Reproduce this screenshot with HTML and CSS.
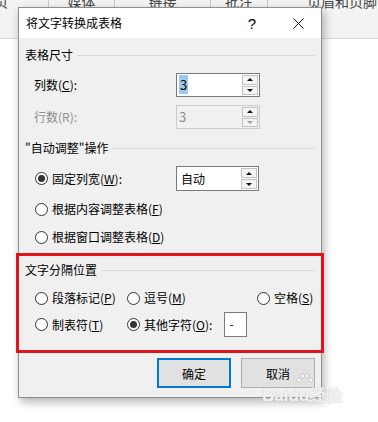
FILE: index.html
```html
<!DOCTYPE html>
<html lang="zh">
<head>
    <meta charset="UTF-8">
    <link rel="stylesheet" href="styles.css">
    <title>将文字转换成表格</title>
</head>
<body>

    <!-- Word ribbon behind the dialog -->
    <div class="ribbon">
        <span class="tab tab-first">页</span>
        <span class="tab tab-media">媒体</span>
        <span class="tab tab-link">链接</span>
        <span class="tab tab-note">批注</span>
        <span class="tab tab-head">页眉和页脚</span>
    </div>

    <div class="dialog">
        <div class="titlebar">
            <span class="title">将文字转换成表格</span>
            <span class="tbtn help">?</span>
            <span class="tbtn close">
                <svg width="11" height="11" viewBox="0 0 11 11"><path d="M0.5 0.5L10.5 10.5M10.5 0.5L0.5 10.5" stroke="#111" stroke-width="1" fill="none"/></svg>
            </span>
        </div>

        <div class="content">
            <div class="group-title first"><span>表格尺寸</span></div>

            <div class="row field-row">
                <span class="lbl">列数(<u>C</u>):</span>
                <div class="spin">
                    <span class="val"><span class="sel">3</span></span>
                    <span class="arrows"><i class="up"></i><i class="down"></i></span>
                </div>
            </div>

            <div class="row field-row second">
                <span class="lbl disabled">行数(R):</span>
                <div class="spin off">
                    <span class="val">3</span>
                    <span class="arrows"><i class="up"></i><i class="down"></i></span>
                </div>
            </div>

            <div class="group-title"><span>"自动调整"操作</span></div>

            <div class="row fixed-row">
                <span class="opt opt-fixed"><span class="radio on"></span>固定列宽(<u>W</u>):</span>
                <div class="spin combo">
                    <span class="val">自动</span>
                    <span class="arrows"><i class="up"></i><i class="down"></i></span>
                </div>
            </div>

            <div class="opt opt-line"><span class="radio"></span>根据内容调整表格(<u>F</u>)</div>
            <div class="opt opt-line last"><span class="radio"></span>根据窗口调整表格(<u>D</u>)</div>

            <div class="marked">
                <div class="group-title legend"><span>文字分隔位置</span></div>

                <div class="sep-row">
                    <span class="opt w1"><span class="radio"></span>段落标记(<u>P</u>)</span>
                    <span class="opt w2"><span class="radio"></span>逗号(<u>M</u>)</span>
                    <span class="opt"><span class="radio"></span>空格(<u>S</u>)</span>
                </div>

                <div class="sep-row tall">
                    <span class="opt w1"><span class="radio"></span>制表符(<u>T</u>)</span>
                    <span class="opt"><span class="radio on"></span>其他字符(<u>O</u>):</span>
                    <span class="char-box">-</span>
                </div>
            </div>

            <div class="buttons">
                <button class="btn default">确定</button>
                <button class="btn">取消</button>
            </div>
        </div>
    </div>

    <!-- watermark -->
    <div class="watermark">
        <svg class="paw" width="18" height="13" viewBox="0 0 18 13">
            <circle cx="3" cy="7" r="2" fill="#fff" stroke="#c8c8c8"/>
            <circle cx="7" cy="3" r="2" fill="#fff" stroke="#c8c8c8"/>
            <circle cx="11" cy="3" r="2" fill="#fff" stroke="#c8c8c8"/>
            <circle cx="15" cy="7" r="2" fill="#fff" stroke="#c8c8c8"/>
        </svg>
        <span>Baidu经验</span>
    </div>

</body>
</html>
```

FILE: styles.css
```css
* {
    box-sizing: border-box;
}

body {
    margin: 0;
    width: 378px;
    height: 422px;
    overflow: hidden;
    position: relative;
    background-color: #fff;
    font-family: "Noto Sans CJK SC", sans-serif;
    font-size: 12px;
    color: #000;
}

/* ribbon */
.ribbon {
    height: 39px;
    background-color: #f3f3f3;
    border-bottom: 1px solid #d9d9d9;
    display: flex;
    overflow: hidden;
}

.tab {
    height: 50px;
    margin-top: -6px;
    border-right: 1px solid #c9c9c9;
    font-size: 14px;
    line-height: 14px;
    color: #444;
    text-align: center;
    flex: none;
}

.tab-first { width: 49px; text-align: left; text-indent: -6px; }
.tab-media { width: 66px; }
.tab-link { width: 96px; }
.tab-note { width: 57px; }
.tab-head { width: 148px; border-right: none; }

/* dialog */
.dialog {
    position: absolute;
    left: 18px;
    top: 7px;
    width: 304px;
    height: 391px;
    border: 1px solid #8e8e8e;
    background-color: #f0f0f0;
    box-shadow: 2px 4px 9px rgba(0, 0, 0, 0.3);
}

.titlebar {
    height: 30px;
    background-color: #fff;
    display: flex;
    align-items: center;
    padding-left: 7px;
}

.title {
    flex: 1;
    line-height: 16px;
}

.tbtn {
    width: 46px;
    height: 30px;
    display: flex;
    align-items: center;
    justify-content: center;
}

.help {
    font-family: "Liberation Sans", sans-serif;
    font-size: 15px;
}

.content {
    padding: 0 6px;
}

.group-title {
    display: flex;
    align-items: center;
    height: 16px;
    margin-top: 11px;
    line-height: 16px;
}

.group-title.first {
    margin-top: 9px;
}

.group-title::after {
    content: "";
    flex: 1;
    border-top: 1px solid #dadada;
    margin-left: 4px;
}

.row {
    display: flex;
    align-items: center;
}

.field-row {
    height: 24px;
    margin-top: 10px;
    padding-left: 9px;
}

.field-row.second {
    margin-top: 8px;
}

.lbl {
    width: 142px;
    line-height: 16px;
}

.disabled {
    color: #8d8d8d;
}

.spin {
    width: 84px;
    height: 24px;
    border: 1px solid #7a7a7a;
    background-color: #fff;
    display: flex;
    align-items: center;
    padding: 1px;
}

.spin .val {
    flex: 1;
    padding-left: 1px;
    font-size: 13px;
    line-height: 18px;
}

.sel {
    background-color: #9fc8ee;
    padding: 0 1px;
}

.spin.off {
    border-color: #cccccc;
    background-color: #f0f0f0;
    color: #8d8d8d;
}

.arrows {
    width: 16px;
    height: 100%;
    display: flex;
    flex-direction: column;
    gap: 1px;
}

.arrows i {
    flex: 1;
    border: 1px solid #c2c2c2;
    background-color: #f4f4f4;
    display: flex;
    align-items: center;
    justify-content: center;
}

.arrows i::after {
    content: "";
    border-left: 3px solid transparent;
    border-right: 3px solid transparent;
}

.arrows .up::after {
    border-bottom: 3px solid #111;
}

.arrows .down::after {
    border-top: 3px solid #111;
}

.spin.off .down::after {
    border-top-color: #a0a0a0;
}

.fixed-row {
    height: 25px;
    margin-top: 10px;
    padding-left: 10px;
}

.combo {
    height: 25px;
    width: 83px;
}

.combo .val {
    font-size: 12px;
    padding-left: 3px;
}

.opt {
    display: flex;
    align-items: center;
    height: 16px;
    line-height: 16px;
    white-space: nowrap;
}

.opt-fixed {
    width: 141px;
}

.opt-line {
    margin-top: 10px;
    padding-left: 10px;
}

.opt-line.last {
    margin-top: 12px;
}

.radio {
    width: 13px;
    height: 13px;
    border: 1px solid #333;
    border-radius: 50%;
    background-color: #fff;
    display: inline-flex;
    align-items: center;
    justify-content: center;
    margin-right: 4px;
    flex: none;
}

.radio.on::after {
    content: "";
    width: 7px;
    height: 7px;
    border-radius: 50%;
    background-color: #333;
}

/* red annotation box */
.marked {
    margin: 8px -9px 0;
    border: 3px solid #e0141c;
    padding: 6px 6px 13px;
}

.marked .legend {
    margin-top: 0;
}

.sep-row {
    display: flex;
    align-items: center;
    height: 16px;
    margin-top: 12px;
    padding-left: 10px;
}

.sep-row.tall {
    height: 25px;
    margin-top: 6px;
}

.w1 {
    width: 92px;
}

.w2 {
    width: 130px;
}

.char-box {
    width: 23px;
    height: 25px;
    margin-left: 12px;
    border: 1px solid #7a7a7a;
    background-color: #fff;
    padding-left: 4px;
    line-height: 22px;
}

.buttons {
    display: flex;
    justify-content: flex-end;
    gap: 10px;
    margin-top: 5px;
}

.btn {
    width: 74px;
    height: 30px;
    border: 1px solid #adadad;
    background-color: #e1e1e1;
    font-family: inherit;
    font-size: 12px;
    color: #000;
    padding: 0;
}

.btn.default {
    border: 2px solid #0078d7;
}

.watermark {
    position: absolute;
    left: 262px;
    top: 373px;
    width: 90px;
    font-family: "Liberation Sans", sans-serif;
    font-weight: bold;
    font-size: 17px;
    line-height: 20px;
    color: rgba(255, 255, 255, 0.85);
    text-shadow: 0 0 1px #b0b0b0;
}

.paw {
    display: block;
    margin-left: 34px;
}
```
